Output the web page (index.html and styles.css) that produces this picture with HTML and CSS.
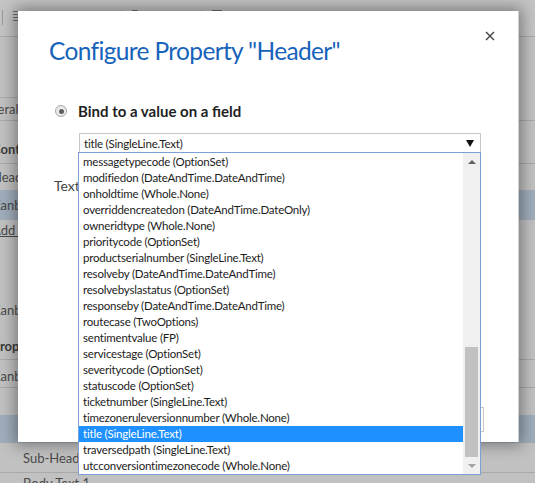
FILE: index.html
```html
<!DOCTYPE html>
<html>
<head>
<meta charset="utf-8">
<link rel="stylesheet" href="styles.css">
</head>
<body>
<div class="page">
  <div class="toolbar">
    <span class="tb-sep"></span>
    <svg class="tb-icon" width="8" height="13" viewBox="0 0 8 13"><path d="M0 1.5h8M0 4.5h8M0 7.5h8M0 10.5h8" stroke="#6d6d6d" stroke-width="1.2"/></svg>
    <span class="tb-spacer"></span>
    <span class="tb-sep"></span>
    <svg class="tb-icon" width="9" height="12" viewBox="0 0 9 12"><path d="M0.5 0.5h5l3 3v8h-8z" fill="none" stroke="#6d6d6d"/></svg>
    <span class="tb-spacer2"></span>
    <span class="tb-sep"></span>
    <svg class="tb-icon" width="10" height="12" viewBox="0 0 10 12"><rect x="0.5" y="0.5" width="9" height="11" fill="none" stroke="#6d6d6d"/></svg>
  </div>
  <div class="row r-blank1"></div>
  <div class="row r-tab"><span class="tab">General</span></div>
  <div class="row r-controls"><span class="lbl bold">Controls</span></div>
  <div class="row r-header"><span class="lbl">Header</span></div>
  <div class="row r-sel"><span class="lbl">Kanban</span></div>
  <div class="row r-add"><span class="lbl link">Add Component</span></div>
  <div class="row r-blank2"></div>
  <div class="row r-kanban2"><span class="lbl">Kanban</span></div>
  <div class="row r-props"><span class="lbl bold">Properties</span></div>
  <div class="row r-kanban3"><span class="lbl">Kanban</span></div>
  <div class="row r-blank3"></div>
  <div class="row r-sel2"></div>
  <div class="row r-sub"><span class="lbl indent">Sub-Header</span></div>
  <div class="row r-body"><span class="lbl indent">Body Text 1</span></div>
</div>

<div class="modal">
  <button class="close" aria-label="Close">
    <svg width="10" height="10" viewBox="0 0 10 10"><path d="M1 1L9 9M9 1L1 9" stroke="#4a4a4a" stroke-width="1.5"/></svg>
  </button>
  <h1 class="title">Configure Property "Header"</h1>
  <div class="bind">
    <span class="radio"><span class="dot"></span></span>
    <span class="bind-label">Bind to a value on a field</span>
  </div>
  <div class="field">
    <div class="select">
      <span>title (SingleLine.Text)</span>
      <svg class="caret" width="8" height="7" viewBox="0 0 8 7"><path d="M0 0H8L4 7Z" fill="#111"/></svg>
    </div>
    <div class="list">
      <ul class="options">
        <li>messagetypecode (OptionSet)</li>
        <li>modifiedon (DateAndTime.DateAndTime)</li>
        <li>onholdtime (Whole.None)</li>
        <li>overriddencreatedon (DateAndTime.DateOnly)</li>
        <li>owneridtype (Whole.None)</li>
        <li>prioritycode (OptionSet)</li>
        <li>productserialnumber (SingleLine.Text)</li>
        <li>resolveby (DateAndTime.DateAndTime)</li>
        <li>resolvebyslastatus (OptionSet)</li>
        <li>responseby (DateAndTime.DateAndTime)</li>
        <li>routecase (TwoOptions)</li>
        <li>sentimentvalue (FP)</li>
        <li>servicestage (OptionSet)</li>
        <li>severitycode (OptionSet)</li>
        <li>statuscode (OptionSet)</li>
        <li>ticketnumber (SingleLine.Text)</li>
        <li>timezoneruleversionnumber (Whole.None)</li>
        <li class="selected">title (SingleLine.Text)</li>
        <li>traversedpath (SingleLine.Text)</li>
        <li>utcconversiontimezonecode (Whole.None)</li>
      </ul>
      <div class="scrollbar">
        <div class="sb-btn"><svg width="8" height="4" viewBox="0 0 8 4"><path d="M0 4H8L4 0Z" fill="#606060"/></svg></div>
        <div class="sb-track"><div class="sb-thumb"></div></div>
        <div class="sb-btn"><svg width="8" height="4" viewBox="0 0 8 4"><path d="M0 0H8L4 4Z" fill="#a3a3a3"/></svg></div>
      </div>
    </div>
  </div>
  <div class="text-label">Text</div>
  <div class="textbox"></div>
</div>
</body>
</html>
```

FILE: styles.css
```css
html, body {
  margin: 0;
  padding: 0;
}
body {
  width: 535px;
  height: 483px;
  overflow: hidden;
  background: #c1c1c1;
  font-family: Lato, "Open Sans", sans-serif;
  position: relative;
}
.page {
  display: flex;
  flex-direction: column;
  color: #4a4a4a;
  font-size: 13px;
}
.toolbar {
  height: 37px;
  box-sizing: border-box;
  border-bottom: 1px solid #a9a9a9;
  background: #c4c4c4;
  display: flex;
  align-items: flex-start;
  padding-top: 10px;
  padding-left: 2px;
}
.tb-sep {
  width: 1px;
  height: 15px;
  background: #9a9a9a;
}
.tb-icon {
  margin-left: 10px;
}
.tb-spacer { width: 100px; }
.tb-spacer2 { width: 60px; }
.row {
  display: flex;
  align-items: center;
  box-sizing: border-box;
  white-space: nowrap;
  overflow: hidden;
}
.lbl { margin-left: -8px; line-height: 16px; }
.lbl.bold { font-weight: 700; color: #3c3c3c; }
.lbl.link { text-decoration: underline; }
.lbl.indent { margin-left: 23px; }
.r-blank1 { height: 60px; }
.r-tab { height: 24px; border-bottom: 1px solid #a9a9a9; }
.tab {
  margin-left: -26px;
  padding: 0 6px 0 0;
  height: 23px;
  line-height: 23px;
  border-top: 1px solid #a9a9a9;
  border-right: 1px solid #a9a9a9;
  box-sizing: border-box;
}
.r-controls { height: 43px; border-bottom: 1px solid #a9a9a9; padding-top: 14px; }
.r-header { height: 26px; }
.r-sel { height: 30px; background: #a0adbb; }
.r-add { height: 20px; }
.r-blank2 { height: 55px; }
.r-kanban2 { height: 30px; }
.r-props { height: 35px; border-bottom: 1px solid #a9a9a9; padding-top: 8px; }
.r-kanban3 { height: 28px; border-bottom: 1px solid #a9a9a9; padding-top: 5px; }
.r-blank3 { height: 27px; }
.r-sel2 { height: 28px; background: #a0adbb; }
.r-sub { height: 30px; border-bottom: 1px solid #a9a9a9; }
.r-body { height: 20px; }

.modal {
  position: absolute;
  left: 18px;
  top: 11px;
  width: 501px;
  height: 431px;
  box-sizing: border-box;
  background: #fff;
  border-right: 1px solid #cfcfcf;
  box-shadow: 0 0 14px 3px rgba(0, 0, 0, 0.38);
  padding-top: 24px;
}
.close {
  position: absolute;
  left: 466px;
  top: 19px;
  width: 12px;
  height: 12px;
  padding: 1px;
  border: 0;
  background: transparent;
  display: flex;
}
.title {
  margin: 0 0 0 31px;
  font-size: 24.5px;
  letter-spacing: -0.65px;
  line-height: 32px;
  font-weight: 400;
  color: #1763bb;
}
.bind {
  display: flex;
  align-items: center;
  margin: 35px 0 0 37px;
  height: 18px;
}
.radio {
  width: 12px;
  height: 12px;
  box-sizing: border-box;
  border-radius: 50%;
  border: 1px solid #a8a8a8;
  background: radial-gradient(circle, #f4f4f4 0, #e2e2e2 100%);
  display: flex;
  align-items: center;
  justify-content: center;
}
.dot {
  width: 5px;
  height: 5px;
  border-radius: 50%;
  background: #5e5e5e;
}
.bind-label {
  margin-left: 11px;
  font-size: 15px;
  font-weight: 700;
  color: #1f1f1f;
}
.field {
  position: relative;
  margin: 13px 0 0 61px;
  width: 402px;
}
.select {
  height: 20px;
  box-sizing: border-box;
  border: 1px solid #c6c6c6;
  display: flex;
  align-items: center;
  justify-content: space-between;
  padding: 0 6px 0 4px;
  font-size: 11.5px;
  letter-spacing: -0.2px;
  color: #222;
}
.caret { margin-top: 1px; }
.list {
  position: absolute;
  top: 19px;
  left: -1px;
  width: 403px;
  height: 323px;
  box-sizing: border-box;
  border: 1px solid #7b9fd6;
  background: #fff;
  display: flex;
  z-index: 2;
}
.options {
  list-style: none;
  margin: 0;
  padding: 1px 0 0 0;
  flex: 1;
  overflow: hidden;
}
.options li {
  height: 16px;
  line-height: 16px;
  padding-left: 4px;
  font-size: 11.5px;
  letter-spacing: -0.2px;
  color: #1c1c1c;
  white-space: nowrap;
}
.options li.selected {
  background: #1e90ff;
  color: #fff;
}
.scrollbar {
  width: 17px;
  background: #f0f0f0;
  display: flex;
  flex-direction: column;
}
.sb-btn {
  height: 17px;
  display: flex;
  align-items: center;
  justify-content: center;
}
.sb-track {
  flex: 1;
  display: flex;
  flex-direction: column;
  justify-content: flex-end;
}
.sb-thumb {
  height: 110px;
  margin: 0 2px;
  background: #c1c1c1;
}
.text-label {
  margin: 23px 0 0 36px;
  font-size: 14px;
  line-height: 20px;
  color: #444;
}
.textbox {
  margin: 211px 0 0 60px;
  width: 406px;
  height: 25px;
  box-sizing: border-box;
  border: 1px solid #c6c6c6;
}
```
